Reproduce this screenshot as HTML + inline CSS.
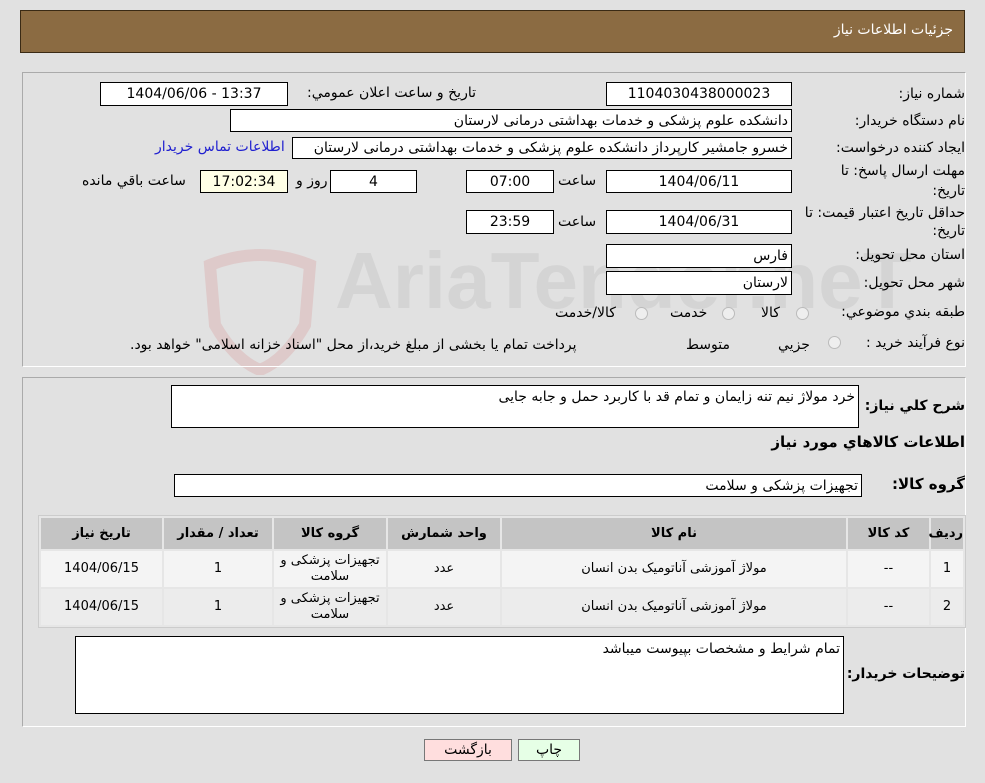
<!DOCTYPE html>
<html><head><meta charset="utf-8">
<style>
body{margin:0;width:985px;height:783px;background:#e1e1e1;font-family:Tahoma,"DejaVu Sans","Liberation Sans",sans-serif;font-size:13px;color:#000;position:relative;overflow:hidden}
.a{position:absolute;white-space:nowrap}
.b{position:absolute;background:#fff;border:1px solid #000;box-sizing:border-box;text-align:center;line-height:22px;font-size:14px}
.l{position:absolute;direction:rtl;white-space:nowrap;font-size:14px;z-index:2}
.r{text-align:right;padding-right:3px;direction:rtl}
.panel{position:absolute;border:1px solid #aaa;border-right-color:#fff;border-bottom-color:#fff;box-sizing:border-box}
.rad{position:absolute;width:11px;height:11px;border-radius:50%;border:1px solid #bbb;background:#eee}
table{position:absolute;border-collapse:separate;border-spacing:2px;background:#e6e6e6;border:1px solid #ccc;font-size:13px;table-layout:fixed;box-sizing:border-box}
th{background:#c4c4c4;height:31px;font-weight:bold;padding:0}
td{text-align:center;height:36px;line-height:16px;padding:0}
tr.r1 td{background:#f4f4f4} tr.r2 td{background:#ececec}
.btn{position:absolute;border:1px solid #777;box-sizing:border-box;text-align:center;line-height:20px;font-size:14px}
</style></head><body>
<div class="a" style="left:20px;top:10px;width:945px;height:43px;background:#8b6b42;border:1px solid #3a2a14;box-sizing:border-box"></div>
<div class="l" style="right:32px;top:22px;color:#fff;font-size:14px">جزئيات اطلاعات نياز</div>

<svg class="a" style="left:195px;top:245px" width="130" height="130" viewBox="0 0 130 130"><path d="M15 20 Q65 0 115 20 L110 80 Q90 115 65 125 Q40 115 20 80 Z" fill="none" stroke="rgba(210,90,90,0.16)" stroke-width="12"/></svg>
<div class="a" style="left:335px;top:235px;font-size:80px;font-weight:bold;color:rgba(120,120,120,0.12);font-family:'Liberation Sans',sans-serif">AriaTender.neT</div>

<div class="panel" style="left:22px;top:72px;width:944px;height:295px"></div>
<div class="l" style="right:20px;top:86px">شماره نياز:</div>
<div class="b" style="left:606px;top:82px;width:186px;height:24px">1104030438000023</div>
<div class="l" style="left:293px;top:85px;width:183px;text-align:right">تاريخ و ساعت اعلان عمومي:</div>
<div class="b" style="left:100px;top:82px;width:188px;height:24px">1404/06/06 - 13:37</div>

<div class="l" style="right:20px;top:113px">نام دستگاه خريدار:</div>
<div class="b r" style="left:230px;top:109px;width:562px;height:23px">دانشکده علوم پزشکی و خدمات بهداشتی  درمانی لارستان</div>

<div class="l" style="right:20px;top:140px">ايجاد کننده درخواست:</div>
<div class="b r" style="left:292px;top:137px;width:500px;height:22px;overflow:hidden;line-height:20px">خسرو جامشير کارپرداز دانشکده علوم پزشکی و خدمات بهداشتی  درمانی لارستان</div>
<div class="l" style="left:155px;top:139px;color:#2020d0">اطلاعات تماس خريدار</div>

<div class="l" style="right:20px;top:163px">مهلت ارسال پاسخ: تا</div>
<div class="l" style="right:20px;top:183px">تاريخ:</div>
<div class="b" style="left:606px;top:170px;width:186px;height:23px">1404/06/11</div>
<div class="l" style="left:558px;top:173px">ساعت</div>
<div class="b" style="left:466px;top:170px;width:88px;height:23px">07:00</div>
<div class="b" style="left:330px;top:170px;width:87px;height:23px">4</div>
<div class="l" style="left:296px;top:173px">روز و</div>
<div class="b" style="left:200px;top:170px;width:88px;height:23px;background:#ffffe6">17:02:34</div>
<div class="l" style="left:82px;top:173px">ساعت باقي مانده</div>

<div class="l" style="right:20px;top:205px">حداقل تاريخ اعتبار قيمت: تا</div>
<div class="l" style="right:20px;top:223px">تاريخ:</div>
<div class="b" style="left:606px;top:210px;width:186px;height:24px">1404/06/31</div>
<div class="l" style="left:558px;top:214px">ساعت</div>
<div class="b" style="left:466px;top:210px;width:88px;height:24px">23:59</div>

<div class="l" style="right:20px;top:247px">استان محل تحويل:</div>
<div class="b r" style="left:606px;top:244px;width:186px;height:24px">فارس</div>
<div class="l" style="right:20px;top:275px">شهر محل تحويل:</div>
<div class="b r" style="left:606px;top:271px;width:186px;height:24px">لارستان</div>

<div class="l" style="right:20px;top:304px">طبقه بندي موضوعي:</div>
<div class="rad" style="left:796px;top:307px"></div><div class="l" style="left:761px;top:305px">کالا</div>
<div class="rad" style="left:722px;top:307px"></div><div class="l" style="left:670px;top:305px">خدمت</div>
<div class="rad" style="left:635px;top:307px"></div><div class="l" style="left:555px;top:305px">کالا/خدمت</div>

<div class="l" style="right:20px;top:335px">نوع فرآيند خريد :</div>
<div class="rad" style="left:828px;top:336px"></div><div class="l" style="left:778px;top:337px">جزيي</div>
<div class="l" style="left:686px;top:337px">متوسط</div>
<div class="l" style="left:130px;top:337px">پرداخت تمام يا بخشی از مبلغ خريد،از محل "اسناد خزانه اسلامی" خواهد بود.</div>

<div class="panel" style="left:22px;top:377px;width:944px;height:350px"></div>
<div class="l" style="right:20px;top:398px;font-weight:bold;font-size:14px">شرح کلي نياز:</div>
<div class="b r" style="left:171px;top:385px;width:688px;height:43px;line-height:22px;font-size:14px">خرد مولاژ نيم تنه زايمان و تمام قد با کاربرد حمل و جابه جايی</div>
<div class="l" style="right:20px;top:433px;font-weight:bold;font-size:15px">اطلاعات کالاهاي مورد نياز</div>
<div class="l" style="right:20px;top:475px;font-weight:bold;font-size:15px">گروه کالا:</div>
<div class="b r" style="left:174px;top:474px;width:688px;height:23px">تجهيزات پزشکی و سلامت</div>

<table style="left:38px;top:515px;width:928px" dir="rtl">
<colgroup><col style="width:32px"><col style="width:81px"><col style="width:344px"><col style="width:112px"><col style="width:112px"><col style="width:108px"><col></colgroup>
<tr><th>رديف</th><th>کد کالا</th><th>نام کالا</th><th>واحد شمارش</th><th>گروه کالا</th><th>تعداد / مقدار</th><th>تاريخ نياز</th></tr>
<tr class="r1"><td>1</td><td>--</td><td>مولاژ آموزشی آناتوميک بدن انسان</td><td>عدد</td><td>تجهيزات پزشکی و سلامت</td><td>1</td><td>1404/06/15</td></tr>
<tr class="r2"><td>2</td><td>--</td><td>مولاژ آموزشی آناتوميک بدن انسان</td><td>عدد</td><td>تجهيزات پزشکی و سلامت</td><td>1</td><td>1404/06/15</td></tr>
</table>

<div class="l" style="right:20px;top:666px;font-weight:bold;font-size:14px">توضيحات خريدار:</div>
<div class="b r" style="left:75px;top:636px;width:769px;height:78px;line-height:24px">تمام شرايط و مشخصات بپيوست ميباشد</div>

<div class="btn" style="left:424px;top:739px;width:88px;height:22px;background:#ffdede">بازگشت</div>
<div class="btn" style="left:518px;top:739px;width:62px;height:22px;background:#e6ffe6">چاپ</div>
</body></html>
